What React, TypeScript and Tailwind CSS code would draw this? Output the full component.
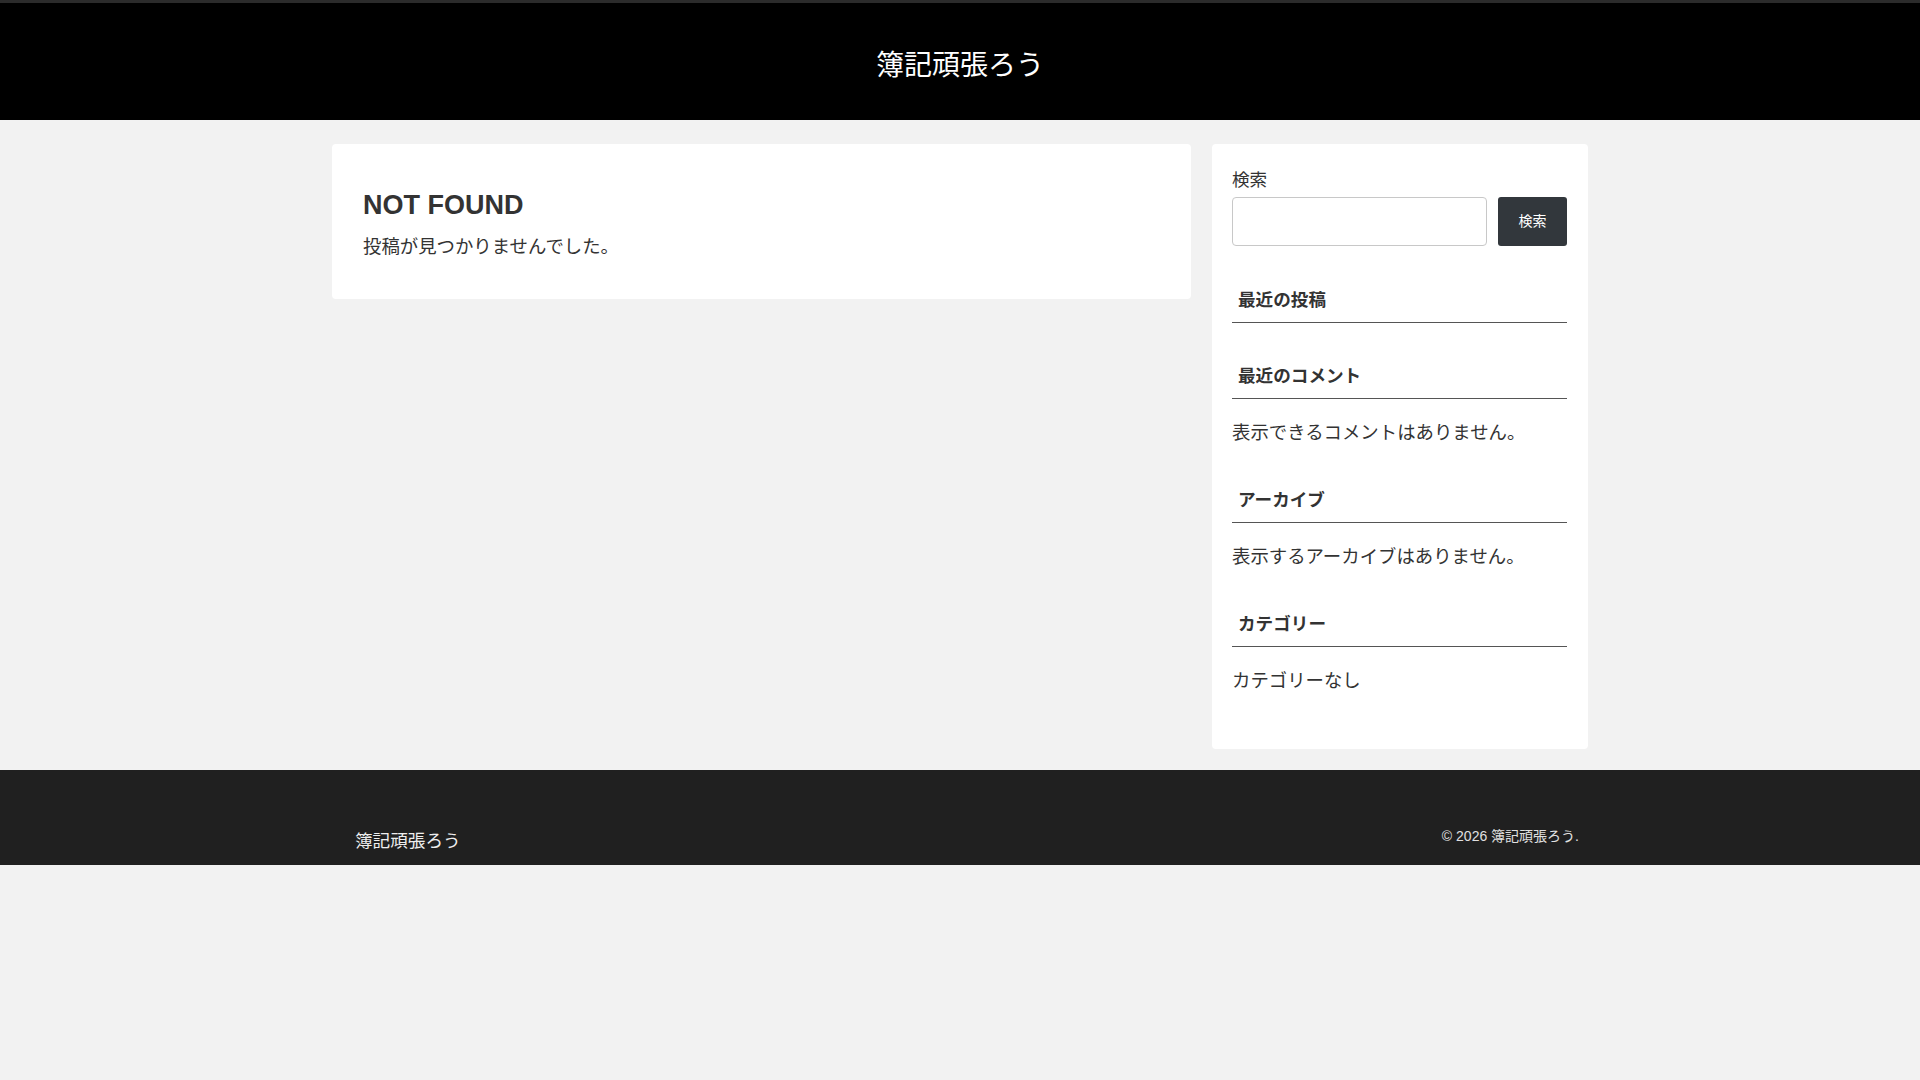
import React from "react";

const font = "[font-family:'Liberation_Sans','Noto_Sans_CJK_JP',sans-serif]";

function SideHeading({ children }: { children: React.ReactNode }) {
  return (
    <h2 className="text-[17.6px] leading-[27px] font-bold text-[#333] pl-[6px] pb-[8px] border-b border-[#555]">
      {children}
    </h2>
  );
}

export default function App() {
  return (
    <div className={`min-h-[1080px] bg-[#f2f2f2] ${font}`}>
      <header className="h-[120px] bg-black border-t-[3px] border-[#2b2b2b] flex items-center justify-center pt-[9px]">
        <h1 className="text-[28px] leading-[42px] font-normal text-white">簿記頑張ろう</h1>
      </header>

      <div className="w-[1256px] mx-auto pt-[24px] pb-[21px] flex gap-[21px] items-start">
        <main className="w-[859px] bg-white rounded-[4px] px-[31px] pt-[45px] pb-[38px]">
          <h1 className="text-[27px] leading-[32px] font-bold text-[#333] mb-[12px]">NOT FOUND</h1>
          <p className="text-[18.4px] leading-[28px] text-[#333]">投稿が見つかりませんでした。</p>
        </main>

        <aside className="w-[376px] bg-white rounded-[4px] pl-[20px] pr-[21px] pt-[23px] pb-[55px] text-[#333]">
          <div>
            <label className="block text-[17.6px] leading-[27px] mb-[3px]">検索</label>
            <div className="flex gap-[11px]">
              <input
                type="text"
                className="w-[255px] h-[49px] border border-[#c8c8c8] rounded-[4px] bg-white outline-none"
              />
              <button className="w-[69px] h-[49px] bg-[#32373c] text-white text-[14px] rounded-[3px]">
                検索
              </button>
            </div>
          </div>

          <div className="mt-[41px]">
            <SideHeading>最近の投稿</SideHeading>
          </div>

          <div className="mt-[40px]">
            <SideHeading>最近のコメント</SideHeading>
            <p className="mt-[20px] text-[18.4px] leading-[27px]">表示できるコメントはありません。</p>
          </div>

          <div className="mt-[41px]">
            <SideHeading>アーカイブ</SideHeading>
            <p className="mt-[20px] text-[18.4px] leading-[27px]">表示するアーカイブはありません。</p>
          </div>

          <div className="mt-[41px]">
            <SideHeading>カテゴリー</SideHeading>
            <p className="mt-[20px] text-[18.4px] leading-[27px]">カテゴリーなし</p>
          </div>
        </aside>
      </div>

      <footer className="h-[95px] bg-[#202020]">
        <div className="w-[1256px] mx-auto h-full flex justify-between items-end pb-[10px]">
          <div className="pl-[23px] text-[17.6px] leading-[27px] text-[#eeeeee]">簿記頑張ろう</div>
          <div className="pr-[9px] mb-[8px] text-[14px] leading-[21px] text-[#e0e0e0]">© 2026 簿記頑張ろう.</div>
        </div>
      </footer>
    </div>
  );
}
